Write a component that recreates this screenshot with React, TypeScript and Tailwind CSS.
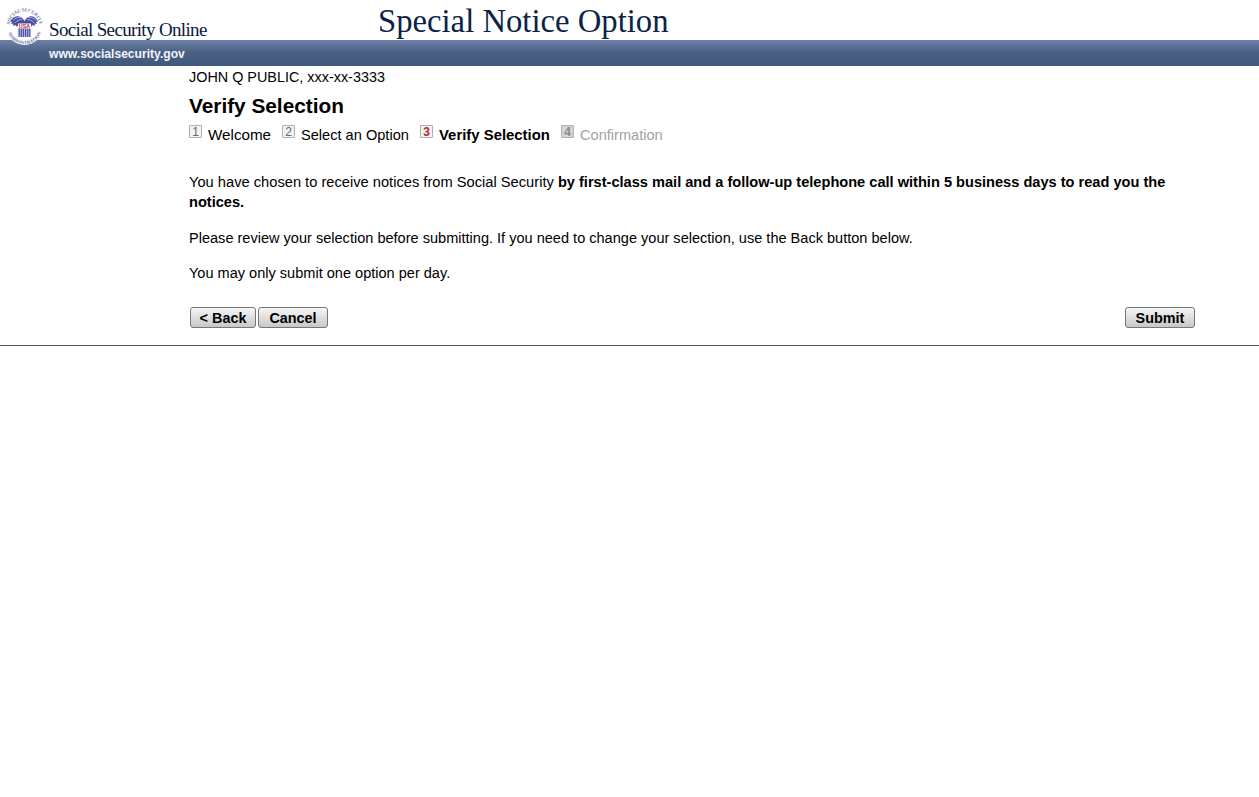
const steps = [
  { num: "1", label: "Welcome", box: "border-[#b0b0b0] bg-[#f2f2f2] text-[#666]", text: "w-[63px] text-[15.2px] text-black", ml: "ml-0" },
  { num: "2", label: "Select an Option", box: "border-[#b0b0b0] bg-[#f2f2f2] text-[#666]", text: "w-[108px] text-[14.6px] text-black", ml: "ml-[11px]" },
  { num: "3", label: "Verify Selection", box: "border-[#b0b0b0] bg-[#f2f2f2] text-[#c8202c] font-bold", text: "w-[111px] text-[14.9px] text-black font-bold", ml: "ml-[11px]" },
  { num: "4", label: "Confirmation", box: "border-[#b0b0b0] bg-[#d4d4d4] text-[#8a8a8a] font-bold", text: "text-[14.6px] text-[#a3a3a3]", ml: "ml-[11px]" },
];

function Seal() {
  return (
    <svg width="37" height="37" viewBox="0 0 37 37" className="absolute left-[6px] top-[8px]">
      <defs>
        <path id="seal-top" d="M3.400 18.500a15.100 15.100 0 0 1 30.200 0" />
        <path id="seal-bottom" d="M0.800 18.500a17.700 17.700 0 0 0 35.400 0" />
      </defs>
      <circle cx="18.500" cy="18.500" r="18.500" fill="#fff" />
      <text fontFamily="'Liberation Serif', serif" fontSize="4.700" fontWeight="700" fill="#6a71a8" textAnchor="middle">
        <textPath href="#seal-top" startOffset="50%">SOCIAL SECURITY</textPath>
      </text>
      <text fontFamily="'Liberation Serif', serif" fontSize="4.700" fontWeight="700" fill="#6a71a8" textAnchor="middle">
        <textPath href="#seal-bottom" startOffset="50%">ADMINISTRATION</textPath>
      </text>
      <path d="M18.500 13C15.500 7.500 9 6 4 13.500l2 .3-1 2.200 2.500-.5-.5 2.400 3-1 .5 1.800 2.500-1.700h10l2.500 1.700.5-1.800 3 1-.5-2.400 2.500.5-1-2.200 2-.3C28 6 21.500 7.500 18.500 13Z" fill="#4a4fa6" />
      <path d="M7 12.500c2.500-2.500 5-3.500 8-3M9 15c2-2.500 4-3.500 7-3.300M30 12.500c-2.500-2.500-5-3.500-8-3M28 15c-2-2.500-4-3.500-7-3.300" fill="none" stroke="#d4d6ee" strokeWidth="0.7" />
      <rect x="12" y="15.500" width="13" height="5" fill="#fff" />
      <text x="18.500" y="20.300" fontFamily="'Liberation Sans', sans-serif" fontSize="5.400" fontWeight="700" fill="#c8202c" textAnchor="middle">USA</text>
      <rect x="12.500" y="20.500" width="12" height="8.500" fill="#4d52a8" />
      <path d="M14.300 20.500v8.500M16.400 20.500v8.500M18.500 20.500v8.500M20.600 20.500v8.500M22.700 20.500v8.500" stroke="#dcdef2" strokeWidth="0.7" />
    </svg>
  );
}

function PageButton({ children, className }: { children: string; className: string }) {
  return (
    <button
      type="button"
      className={`h-[21px] rounded-[3px] border border-[#777] bg-gradient-to-b from-[#f6f6f6] to-[#c8c8c8] text-[14.4px] leading-[20px] font-bold text-black ${className}`}
    >
      {children}
    </button>
  );
}

export default function App() {
  return (
    <div className="min-h-[797px] bg-white font-['Liberation_Sans',Arial,sans-serif] text-[14.6px] text-black">
      <header className="relative">
        <div className="flex h-10 items-end">
          <span className="ml-[49px] w-[329px] font-['Liberation_Serif',serif] text-[19px] leading-[21px] tracking-[-0.65px] text-[#0a1a3a]">
            Social Security Online
          </span>
          <h1 className="font-['Liberation_Serif',serif] text-[32.7px] leading-[38px] text-[#0b2347]">
            Special Notice Option
          </h1>
        </div>
        <div className="h-[26px] bg-[linear-gradient(#6f83a8,#4a6285_45%,#40587c)] pl-[49px] text-[12.1px] leading-[28px] font-bold text-[#f2f5fa]">
          www.socialsecurity.gov
        </div>
        <Seal />
      </header>

      <main className="ml-[189px] w-[1006px]">
        <p className="pt-[2px] text-[14.4px] leading-[18px]">JOHN Q PUBLIC, xxx-xx-3333</p>
        <h2 className="mt-[8px] text-[20.8px] leading-[24px] font-bold">Verify Selection</h2>
        <ol className="mt-[7px] flex h-[20px] items-center">
          {steps.map((step) => (
            <li key={step.num} className={`flex items-center ${step.ml}`}>
              <span
                className={`mb-[7px] flex h-[13px] w-[13px] items-center justify-center rounded-[1px] border text-[12px] leading-none ${step.box}`}
              >
                {step.num}
              </span>
              <span className={`ml-[6px] leading-[20px] ${step.text}`}>{step.label}</span>
            </li>
          ))}
        </ol>
        <p className="mt-[27px] text-[14.68px] leading-[20px]">
          You have chosen to receive notices from Social Security{" "}
          <strong className="text-[14.6px]">
            by first-class mail and a follow-up telephone call within 5 business days to read you the notices.
          </strong>
        </p>
        <p className="mt-[17px] text-[14.56px] leading-[18px]">
          Please review your selection before submitting. If you need to change your selection, use the Back button below.
        </p>
        <p className="mt-[17px] text-[14.55px] leading-[18px]">You may only submit one option per day.</p>
        <div className="mt-[25px] flex items-center pl-[1px]">
          <PageButton className="w-[66px]">{"< Back"}</PageButton>
          <PageButton className="ml-[2px] w-[70px]">Cancel</PageButton>
          <PageButton className="ml-auto w-[70px]">Submit</PageButton>
        </div>
      </main>
      <hr className="mt-[17px] border-t border-[#555]" />
    </div>
  );
}
